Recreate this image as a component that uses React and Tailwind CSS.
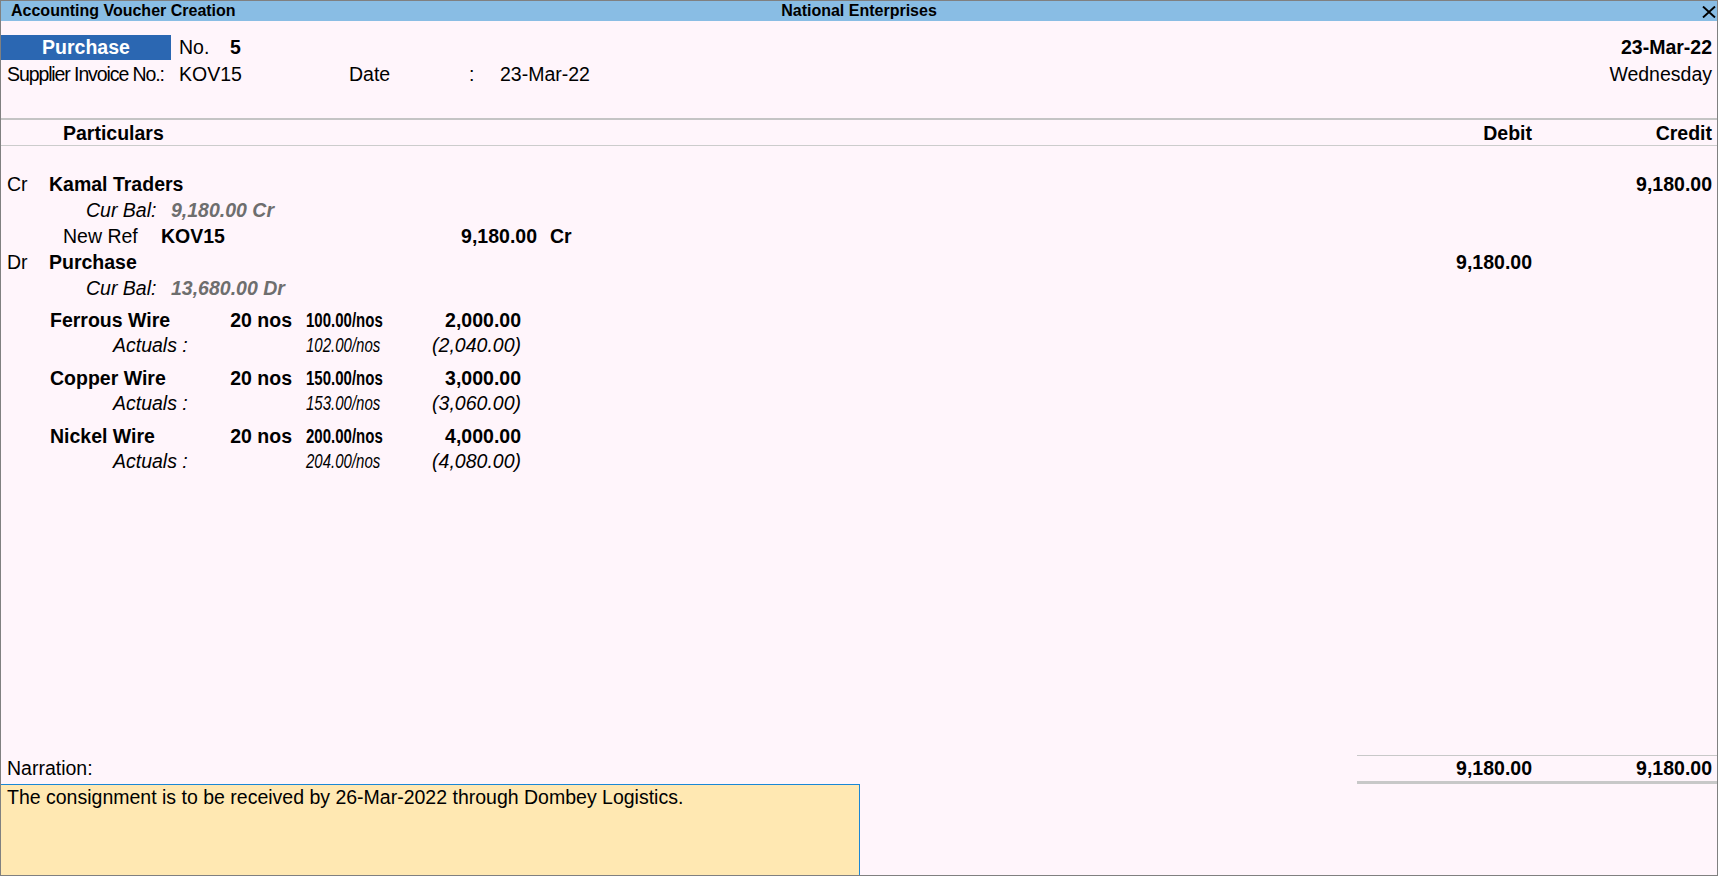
import React from 'react';

const items = [
  { name: 'Ferrous Wire', qty: '20 nos', rate: '100.00/nos', amount: '2,000.00', actRate: '102.00/nos', actAmount: '(2,040.00)' },
  { name: 'Copper Wire', qty: '20 nos', rate: '150.00/nos', amount: '3,000.00', actRate: '153.00/nos', actAmount: '(3,060.00)' },
  { name: 'Nickel Wire', qty: '20 nos', rate: '200.00/nos', amount: '4,000.00', actRate: '204.00/nos', actAmount: '(4,080.00)' },
];

const Row = ({ children, debit, credit, className = '' }) => (
  <div className={`flex h-[26px] items-center pr-[5px] ${className}`}>
    <div className="flex flex-1 items-center">{children}</div>
    <div className="w-[180px] text-right font-bold">{debit}</div>
    <div className="w-[180px] text-right font-bold">{credit}</div>
  </div>
);

// rates are printed in a narrow face in the original
const Narrow = ({ children, className = '' }) => (
  <span className="w-[76px] whitespace-nowrap">
    <span className={`inline-block origin-left scale-x-[0.77] ${className}`}>{children}</span>
  </span>
);

const App = () => {
  return (
    <div className="w-[1718px] h-[876px] border border-[#808080] bg-[#fff5fb] flex flex-col font-['Liberation_Sans',Arial,sans-serif] text-[19.5px] leading-[26px] text-black overflow-hidden">
      {/* Title bar */}
      <div className="relative h-[20px] bg-[#89bde4] flex items-center pl-[10px] pr-[1px] text-[16px] font-bold leading-[20px]">
        <span>Accounting Voucher Creation</span>
        <span className="absolute left-1/2 -translate-x-1/2">National Enterprises</span>
        <svg className="ml-auto mt-[2px]" width="14" height="12" viewBox="0 0 14 12">
          <path d="M1 0.5 L13 11.5 M13 0.5 L1 11.5" stroke="#000" strokeWidth="1.9" fill="none" />
        </svg>
      </div>

      {/* Voucher header */}
      <div className="pt-[14px]">
        <div className="flex h-[26px] items-start pr-[5px]">
          <div className="w-[170px] h-[25px] bg-[#2b67b2] text-white font-bold text-center leading-[25px]">Purchase</div>
          <span className="ml-[8px] w-[51px] leading-[25px]">No.</span>
          <span className="font-bold leading-[25px]">5</span>
          <span className="ml-auto font-bold leading-[25px]">23-Mar-22</span>
        </div>
        <div className="flex h-[26px] items-center pl-[6px] pr-[5px]">
          <span className="w-[172px] tracking-[-1.1px] whitespace-nowrap">Supplier Invoice No.:</span>
          <span className="w-[170px]">KOV15</span>
          <span className="w-[120px]">Date</span>
          <span className="w-[31px]">:</span>
          <span>23-Mar-22</span>
          <span className="ml-auto">Wednesday</span>
        </div>
      </div>

      {/* Column header */}
      <div className="mt-[31px] border-t-2 border-[#c4c4c4]">
        <Row debit="Debit" credit="Credit" className="border-b border-[#cccccc]">
          <span className="pl-[62px] font-bold">Particulars</span>
        </Row>
      </div>

      {/* Entries */}
      <div className="flex-1 pt-[25px]">
        <Row credit="9,180.00">
          <span className="pl-[6px] w-[48px]">Cr</span>
          <span className="font-bold">Kamal Traders</span>
        </Row>
        <Row>
          <span className="pl-[85px] w-[170px] italic">Cur Bal:</span>
          <span className="italic font-bold text-[#6e6e6e]">9,180.00 Cr</span>
        </Row>
        <Row>
          <span className="pl-[62px] w-[160px]">New Ref</span>
          <span className="w-[200px] font-bold">KOV15</span>
          <span className="w-[176px] text-right font-bold">9,180.00</span>
          <span className="pl-[13px] font-bold">Cr</span>
        </Row>
        <Row debit="9,180.00">
          <span className="pl-[6px] w-[48px]">Dr</span>
          <span className="font-bold">Purchase</span>
        </Row>
        <Row>
          <span className="pl-[85px] w-[170px] italic">Cur Bal:</span>
          <span className="italic font-bold text-[#6e6e6e]">13,680.00 Dr</span>
        </Row>

        <div className="mt-[7px] flex flex-col gap-[8px]">
          {items.map((it) => (
            <div key={it.name}>
              <div className="flex h-[25px] items-center leading-[25px]">
                <span className="pl-[49px] w-[229px] font-bold">{it.name}</span>
                <span className="w-[62px] text-right font-bold whitespace-nowrap">{it.qty}</span>
                <span className="w-[14px]" />
                <Narrow className="font-bold">{it.rate}</Narrow>
                <span className="w-[139px] text-right font-bold">{it.amount}</span>
              </div>
              <div className="flex h-[25px] items-center leading-[25px] italic">
                <span className="pl-[112px] w-[305px]">Actuals :</span>
                <Narrow>{it.actRate}</Narrow>
                <span className="w-[139px] text-right">{it.actAmount}</span>
              </div>
            </div>
          ))}
        </div>
      </div>

      {/* Footer */}
      <div className="flex h-[29px]">
        <span className="pl-[6px] leading-[25px] pt-[1px]">Narration:</span>
        <div className="ml-auto w-[360px] border-t border-b-[3px] border-b-double border-[#c8c8c8] flex h-[29px] pr-[5px] font-bold leading-[25px]">
          <span className="w-[175px] text-right">9,180.00</span>
          <span className="w-[180px] text-right">9,180.00</span>
        </div>
      </div>
      <div className="w-[859px] h-[91px] bg-[#ffe8b2] border-t border-r border-[#1a87d6] pl-[6px] leading-[25px]">
        The consignment is to be received by 26-Mar-2022 through Dombey Logistics.
      </div>
    </div>
  );
};

export default App;
